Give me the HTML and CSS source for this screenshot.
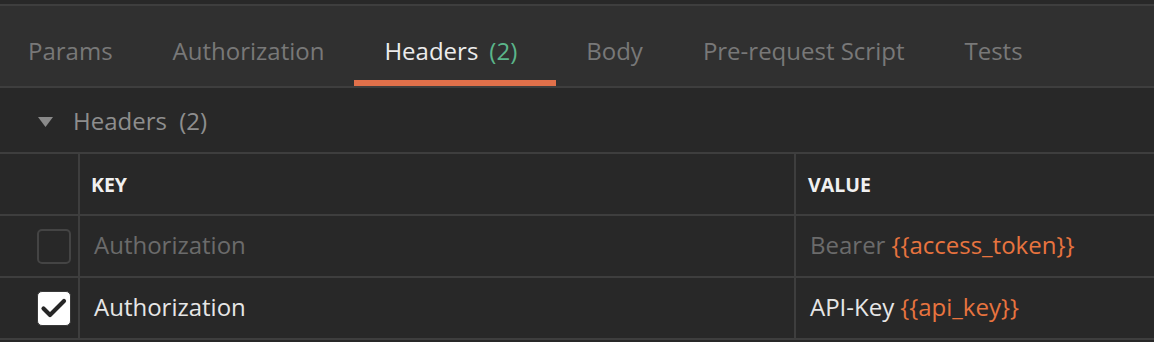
FILE: index.html
```html
<!DOCTYPE html>
<html>
<head>
<meta charset="utf-8">
<link rel="stylesheet" href="styles.css">
</head>
<body>
<div class="pane">
  <nav class="tabs">
    <div class="tab">Params</div>
    <div class="tab">Authorization</div>
    <div class="tab active">Headers <span class="count">(2)</span></div>
    <div class="tab">Body</div>
    <div class="tab">Pre-request Script</div>
    <div class="tab">Tests</div>
  </nav>
  <div class="section-title">
    <svg class="caret" width="15" height="10" viewBox="0 0 15 10"><path d="M0 0 H15 L7.5 10 Z" fill="#8a8a8a"/></svg>
    <span>Headers <span class="sub">(2)</span></span>
  </div>
  <div class="table">
    <div class="row head">
      <div class="cell check"></div>
      <div class="cell key">KEY</div>
      <div class="cell value">VALUE</div>
    </div>
    <div class="row disabled">
      <div class="cell check"><span class="box"></span></div>
      <div class="cell key">Authorization</div>
      <div class="cell value">Bearer <span class="var">{{access_token}}</span></div>
    </div>
    <div class="row">
      <div class="cell check"><span class="box on"><svg width="34" height="34" viewBox="0 0 34 34"><path d="M6.5 17.5 L13 24 L27 10" fill="none" stroke="#262626" stroke-width="4.2" stroke-linecap="round" stroke-linejoin="round"/></svg></span></div>
      <div class="cell key">Authorization</div>
      <div class="cell value">API-Key <span class="var">{{api_key}}</span></div>
    </div>
  </div>
</div>
</body>
</html>
```
FILE: styles.css
```css
* { box-sizing: border-box; }
html, body { margin: 0; padding: 0; }
body {
  background: #282828;
  font-family: "Open Sans", "Liberation Sans", sans-serif;
  width: 1154px;
  height: 342px;
  overflow: hidden;
}
.pane { padding-top: 4px; }
.tabs {
  display: flex;
  height: 84px;
  background: #303030;
  border-top: 2px solid #3e3e3e;
  border-bottom: 2px solid #3e3e3e;
  margin-left: -2px;
}
.tab {
  display: flex;
  align-items: center;
  padding: 15px 30px 0;
  font-size: 24px;
  color: #787878;
  border-bottom: 6px solid transparent;
  white-space: nowrap;
}
.tab.active {
  color: #ececec;
  border-bottom-color: #e0704a;
  padding-right: 39px;
}
.count { color: #5bb58a; margin-left: 11px; }
.section-title {
  height: 66px;
  display: flex;
  align-items: center;
  padding-left: 38px;
  font-size: 24px;
  color: #8e8e8e;
  border-bottom: 2px solid #3e3e3e;
}
.sub { margin-left: 6px; }
.caret { margin-right: 20px; margin-top: 4px; }
.row {
  display: flex;
  height: 62px;
  border-bottom: 2px solid #3e3e3e;
}
.cell {
  display: flex;
  align-items: center;
  font-size: 24px;
  color: #e6e6e6;
}
.row:not(.head) .key,
.row:not(.head) .value { padding-bottom: 3px; }
.check {
  width: 80px;
  border-right: 2px solid #3e3e3e;
  padding-left: 37px;
}
.key {
  width: 716px;
  border-right: 2px solid #3e3e3e;
  padding-left: 14px;
}
.value {
  flex: 1;
  padding-left: 14px;
}
.head .cell {
  font-size: 19.5px;
  font-weight: 700;
  color: #f0f0f0;
}
.head .key { padding-left: 11px; }
.head .value { padding-left: 12px; }
.disabled .cell { color: #6b6b6b; }
.var { color: #e8743f; margin-left: 6px; }
.box {
  width: 34px;
  height: 35px;
  border: 2px solid #444;
  border-radius: 5px;
  display: block;
}
.box.on {
  background: #ffffff;
  border-color: #3a3a3a;
  border-width: 1px;
}
.box.on svg { display: block; margin: -1px 0 0 -1px; }
```
